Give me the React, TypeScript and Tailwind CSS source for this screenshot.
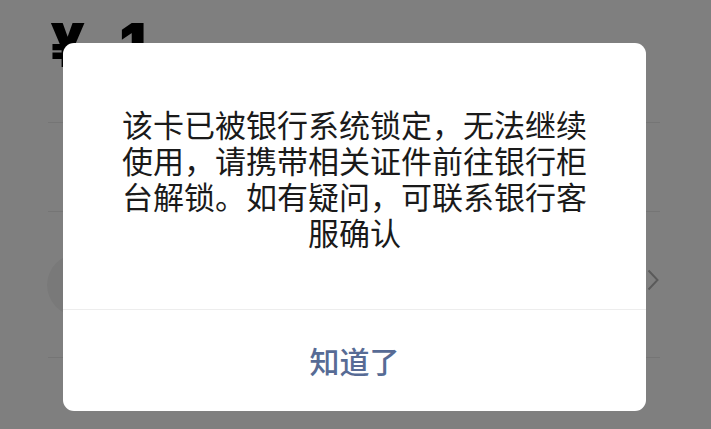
import React from 'react';

const cjk = { fontFamily: '"Noto Sans CJK SC", "Noto Sans", sans-serif' };

export default function App() {
  return (
    <div className="relative w-full h-[429px] overflow-hidden bg-white" style={cjk}>
      {/* page behind the dialog */}
      <div className="px-12">
        <div className="h-[122px] pt-[15px] flex items-start text-black font-black text-[60px] leading-none" style={{ fontFamily: 'Inter, "Liberation Sans", sans-serif' }}>
          <span className="ml-[2px]">¥</span>
          <span className="ml-[34px]">1</span>
        </div>
        <div className="h-[89px] border-t border-[#ebebeb] mr-[3px]" />
        <div className="h-[146px] border-t border-[#ebebeb] mr-[3px] flex items-center justify-between">
          <div className="w-[62px] h-[62px] rounded-full bg-[#f3f3f3] -ml-[1px]" />
          <svg width="12" height="22" viewBox="0 0 12 22" className="mr-[1px] -mt-[10px]">
            <path d="M1.5 1.5 L10.5 11 L1.5 20.5" fill="none" stroke="#b5b5b5" strokeWidth="2" />
          </svg>
        </div>
        <div className="border-t border-[#ebebeb] mr-[3px]" />
      </div>

      {/* mask */}
      <div className="absolute inset-0 bg-black/50" />

      {/* dialog */}
      <div className="absolute inset-0 flex justify-center items-start pt-[43px]">
        <div className="w-[583px] h-[368px] bg-white rounded-[11px] flex flex-col overflow-hidden -translate-x-[1px]">
          <div className="flex-1 px-[52px] pt-[63px] text-center text-[31px] leading-[36px] text-[#1a1a1a]">
            该卡已被银行系统锁定，无法继续使用，请携带相关证件前往银行柜台解锁。如有疑问，可联系银行客服确认
          </div>
          <div className="h-[102px] border-t border-[#ededed] flex items-center justify-center text-[30px] font-medium text-[#576b95]">
            知道了
          </div>
        </div>
      </div>
    </div>
  );
}
